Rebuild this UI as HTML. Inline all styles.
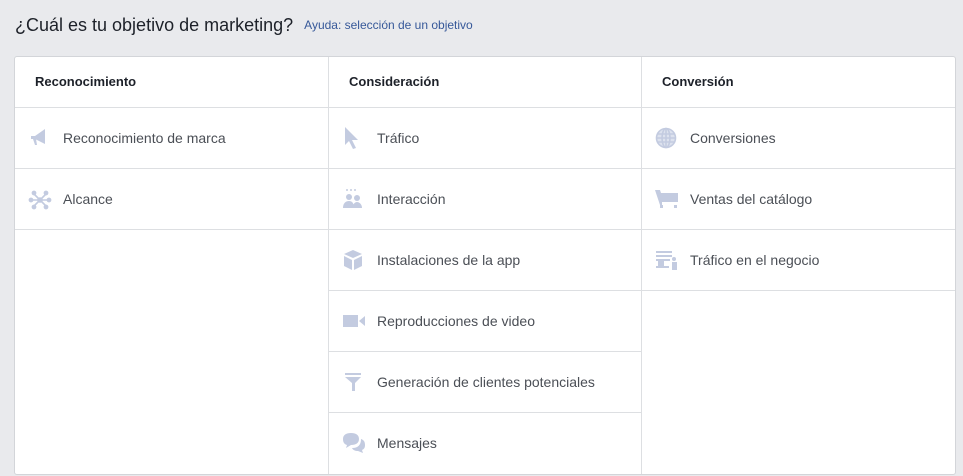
<!DOCTYPE html>
<html><head><meta charset="utf-8"><style>
body{margin:0;width:963px;height:476px;background:#e9eaed;font-family:"Liberation Sans",sans-serif;position:relative;overflow:hidden}
.t{position:absolute;left:15px;top:15px;font-size:18px;color:#1d2129}
.l{font-size:12px;color:#365899;margin-left:6px;vertical-align:2px}
.p{position:absolute;left:14px;top:56px;width:940px;height:417px;background:#fff;border:1px solid #d3d5d9;border-radius:3px}
.c{position:absolute;top:0;height:417px;border-right:1px solid #dddfe2}
.h{height:50px;line-height:50px;padding-left:20px;font-size:13px;font-weight:bold;color:#1d2129;border-bottom:1px solid #dddfe2}
.r{height:60px;line-height:60px;border-bottom:1px solid #dddfe2;position:relative;font-size:14px;color:#4b4f56;padding-left:48px}
.r svg{position:absolute;left:13px;top:19px}
</style></head><body>
<div class="t">¿Cuál es tu objetivo de marketing? <span class="l">Ayuda: selección de un objetivo</span></div>
<div class="p">
<div class="c" style="left:0;width:313px">
<div class="h">Reconocimiento</div>
<div class="r"><svg width="22" height="22" viewBox="0 0 22 22" fill="#c3cbe0"><path d="M3 9h4l10-7v15L7 12H3z"/><path d="M5 12l2 6h2l-1-6z"/></svg>Reconocimiento de marca</div>
<div class="r"><svg width="24" height="24" viewBox="0 0 24 24" fill="#c3cbe0" stroke="#c3cbe0" stroke-width="1.6"><path d="M6 6l12 12M18 6L6 18M3 12h18"/><circle cx="12" cy="12" r="2"/><circle cx="3" cy="12" r="1.6"/><circle cx="21" cy="12" r="1.6"/><circle cx="6" cy="5" r="1.6"/><circle cx="18" cy="5" r="1.6"/><circle cx="6" cy="19" r="1.6"/><circle cx="18" cy="19" r="1.6"/></svg>Alcance</div>
</div>
<div class="c" style="left:314px;width:312px">
<div class="h">Consideración</div>
<div class="r"><svg width="22" height="22" viewBox="0 0 22 22" fill="#c3cbe0"><path d="M3 0l13 13h-6l4 8-3 1-4-8-4 4z"/></svg>Tráfico</div>
<div class="r"><svg width="22" height="22" viewBox="0 0 22 22" fill="#c3cbe0"><circle cx="7" cy="9" r="3"/><circle cx="15" cy="10" r="3"/><path d="M1 20c0-5 3-7 6-7s5 2 5 7zM10 20c1-4 3-6 5-6s5 2 5 6z"/><circle cx="5" cy="2" r="1"/><circle cx="9" cy="2" r="1"/><circle cx="13" cy="2" r="1"/></svg>Interacción</div>
<div class="r"><svg width="22" height="22" viewBox="0 0 22 22" fill="#c3cbe0"><path d="M11 1l9 4-9 4-9-4z"/><path d="M2 7l8 4v10l-8-4zM20 7l-8 4v10l8-4z"/></svg>Instalaciones de la app</div>
<div class="r"><svg width="24" height="22" viewBox="0 0 24 22" fill="#c3cbe0"><rect x="1" y="5" width="15" height="12"/><path d="M17 11l6-5v10z"/></svg>Reproducciones de video</div>
<div class="r"><svg width="22" height="22" viewBox="0 0 22 22" fill="#c3cbe0"><path d="M3 2h16v2H3zM3 6h16l-6 6v8h-3v-8z"/></svg>Generación de clientes potenciales</div>
<div class="r" style="border:0"><svg width="24" height="24" viewBox="0 0 24 24" fill="#c3cbe0"><path d="M1 7c0-4 3-6 8-6s8 2 8 6-3 6-8 6l-5 3 1-3c-3-1-4-3-4-6z"/><path d="M19 7c3 1 4 3 4 6s-1 4-3 5l1 3-5-2c-3 0-5-1-6-3 6 0 9-3 9-9z"/></svg>Mensajes</div>
</div>
<div class="c" style="left:627px;width:313px;border:0">
<div class="h">Conversión</div>
<div class="r"><svg width="22" height="22" viewBox="0 0 22 22" fill="none" stroke="#c3cbe0" stroke-width="1.6"><circle cx="11" cy="11" r="9.5" fill="#dde2ee"/><ellipse cx="11" cy="11" rx="4" ry="9.5"/><path d="M2 11h18M3 7h16M3 15h16M11 1.5v19"/></svg>Conversiones</div>
<div class="r"><svg width="24" height="22" viewBox="0 0 24 22" fill="#c3cbe0"><path d="M0 2h5l1 3h17v9H7v3h-2z"/><rect x="5" y="17" width="3" height="3"/><rect x="19" y="17" width="3" height="3"/></svg>Ventas del catálogo</div>
<div class="r"><svg width="24" height="22" viewBox="0 0 24 22" fill="#c3cbe0"><rect x="1" y="2" width="16" height="2"/><rect x="1" y="6" width="16" height="2"/><path d="M1 10h14v2H9v5h5v2H1v-2h2v-5H1z"/><circle cx="19" cy="10" r="2"/><rect x="17" y="13" width="5" height="8"/></svg>Tráfico en el negocio</div>
</div>
</div>
</body></html>
